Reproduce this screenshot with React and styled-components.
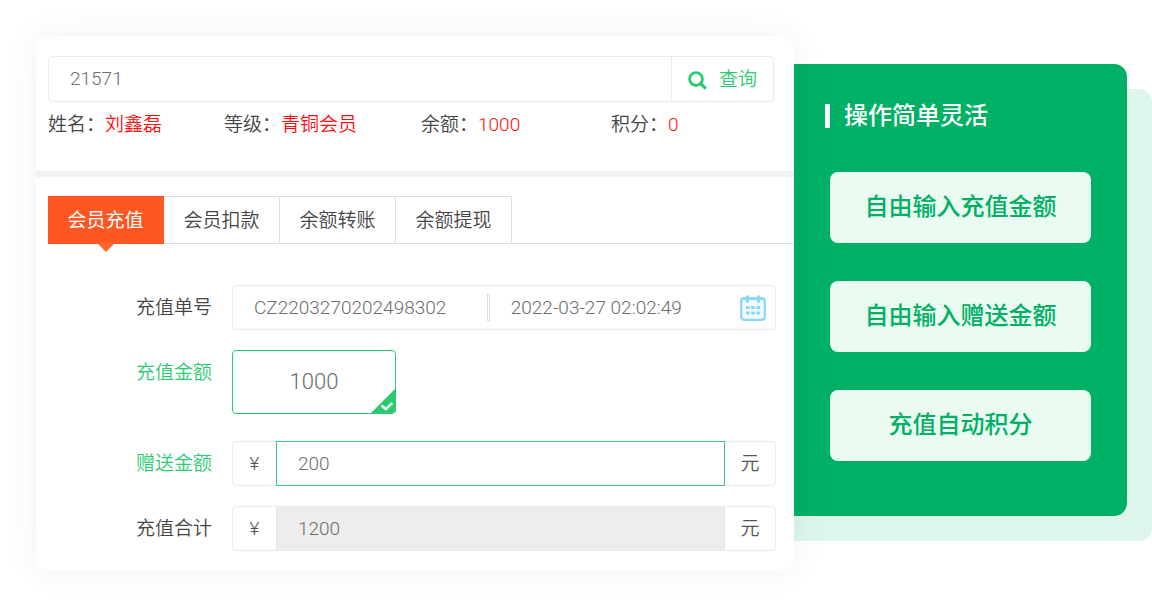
import React, { useState } from "react";
import styled, { createGlobalStyle, css } from "styled-components";

const green = "#2acb70";
const line = "#ebebeb";

const GlobalStyle = createGlobalStyle`
  *, *::before, *::after { box-sizing: border-box; }
  body {
    margin: 0;
    background: #fff;
    color: #444;
    font: 350 19px/28px Roboto, "Noto Sans CJK SC", sans-serif;
  }
  button, input { font: inherit; color: inherit; }
  ul, dl, dd, h2 { margin: 0; padding: 0; list-style: none; }
`;

const Page = styled.div`
  display: grid;
  grid-template-columns: minmax(0, 758fr) minmax(0, 333fr);
  align-items: start;
  padding: 36px 25px 36px 36px;
`;

const Card = styled.main`
  position: relative;
  z-index: 1;
  background: #fff;
  border-radius: 14px;
  box-shadow: 0 0 36px rgba(0, 0, 0, 0.06);
`;

const Member = styled.section`
  padding: 20px 20px 32px 12px;
  border-bottom: 6px solid #f2f2f2;
`;

const fieldBox = css`
  display: flex;
  align-items: stretch;
  border: 1px solid ${line};
  border-radius: 4px;
`;

const SearchBar = styled.form`
  ${fieldBox}
  height: 46px;
`;

const TextInput = styled.input`
  flex: ${(p) => p.$grow ?? 1} 1 0;
  min-width: 0;
  padding: 0 21px;
  border: 0;
  outline: 0;
  background: transparent;
  color: #6c6c6c;
`;

const SearchButton = styled.button`
  display: flex;
  align-items: center;
  gap: 12px;
  padding: 2px 16px 0;
  border: 0;
  border-left: 1px solid ${line};
  background: none;
  color: ${green};
  cursor: pointer;
`;

const Facts = styled.dl`
  display: grid;
  grid-template-columns: 176fr 197fr 190fr 163fr;
  margin-top: 9px;
`;

const Fact = styled.div`
  display: flex;
  white-space: nowrap;

  dd { color: #ff0d0d; }
`;

const Tabs = styled.div`
  display: flex;
  margin: 19px 0 0 12px;
  border-bottom: 1px solid #dedede;
`;

const Tab = styled.button`
  position: relative;
  width: 116px;
  height: 48px;
  margin-bottom: -1px;
  padding: 2px 0 0;
  border: solid #dedede;
  border-width: 1px 1px 1px 0;
  background: #fff;
  cursor: pointer;

  ${(p) =>
    p.$active &&
    css`
      border-color: #ff5722;
      background: #ff5722;
      color: #fff;
      font-weight: 400;

      &::after {
        content: "";
        position: absolute;
        top: 100%;
        left: 50%;
        margin-left: -9px;
        border: 9px solid transparent;
        border-bottom: 0;
        border-top-color: #ff6636;
      }
    `}
`;

const Form = styled.form`
  display: grid;
  gap: 20px;
  padding: 41px 18px 20px 36px;
`;

const Row = styled.div`
  display: grid;
  grid-template-columns: 140px minmax(0, 1fr);
  column-gap: 20px;
  padding-bottom: ${(p) => (p.$spaced ? 7 : 0)}px;
`;

const Label = styled.label`
  line-height: 46px;
  height: 45px;
  text-align: right;
  color: ${(p) => (p.$required ? green : "#444")};
`;

const Field = styled.div`
  ${fieldBox}
  height: 45px;
`;

const Divider = styled.span`
  width: 3px;
  margin: 8px 0;
  border: 1px solid #dcdcdc;
`;

const CalendarButton = styled.button`
  display: flex;
  align-items: center;
  padding: 0 9px;
  border: 0;
  background: none;
  cursor: pointer;
`;

const Unit = styled.span`
  width: ${(p) => p.$width}px;
  line-height: 43px;
  text-align: center;
  color: #555;
`;

const AmountInput = styled(TextInput)`
  ${(p) =>
    p.readOnly
      ? css`
          border: solid #e6e6e6;
          border-width: 0 1px;
          background: #ededed;
        `
      : css`
          margin: -1px 0;
          border: 1px solid #3cc884;
        `}
`;

const Preset = styled.button`
  position: relative;
  width: 164px;
  height: 64px;
  padding: 0;
  border: 1px solid ${green};
  border-radius: 4px;
  background: #fff;
  color: #6c6c6c;
  font-size: 22px;
  overflow: hidden;

  svg {
    position: absolute;
    right: -1px;
    bottom: -1px;
  }
`;

const Promo = styled.aside`
  margin-top: 28px;
  padding: 40px 36px 55px;
  border-radius: 0 13px 13px 0;
  background: #00b065;
  box-shadow: 25px 25px 0 #def5eb, 0 25px 0 #def5eb;
`;

const PromoTitle = styled.h2`
  display: flex;
  align-items: center;
  gap: 14px;
  margin: 0 0 44px -5px;
  color: #fff;
  font-size: 24px;
  font-weight: 500;
  line-height: 24px;

  &::before {
    content: "";
    width: 5px;
    height: 24px;
    background: #fff;
  }
`;

const PromoList = styled.ul`
  display: grid;
  gap: 38px;
`;

const PromoItem = styled.li`
  padding: 17px 0 18px;
  border-radius: 8px;
  background: #eafbf2;
  color: #00b065;
  font-size: 24px;
  font-weight: 500;
  line-height: 36px;
  text-align: center;
`;

const SearchIcon = () => (
  <svg width="19" height="19" viewBox="0 0 19 19" fill="none" stroke={green} aria-hidden="true">
    <circle cx="8" cy="8" r="6.4" strokeWidth="2.8" />
    <path d="M12.6 12.5l4.2 4.2" strokeWidth="3.2" strokeLinecap="round" />
  </svg>
);

const CalendarIcon = () => (
  <svg width="26" height="26" viewBox="0 0 26 26" fill="none" stroke="#8bd6fa" aria-hidden="true">
    <rect x="1.2" y="3" width="23.6" height="21.8" rx="3" fill="#f1fbff" strokeWidth="2.2" />
    <path d="M2.5 3.6h21" strokeWidth="3" />
    <path d="M7.5 1.5v5M18.5 1.5v5" strokeWidth="3" strokeLinecap="round" />
    <path
      d="M6 12.5h3.6M11.2 12.5h3.6M16.4 12.5h3.6M6 18h3.6M11.2 18h3.6M16.4 18h3.6"
      strokeWidth="3"
    />
  </svg>
);

const CornerCheck = () => (
  <svg width="26" height="26" viewBox="0 0 26 26" fill="none" aria-hidden="true">
    <path d="M26 0v26H0z" fill={green} />
    <path d="M11.5 17.5l4.4 3.6 6.4-6.2" stroke="#f2fff7" strokeWidth="2.6" />
  </svg>
);

const facts = [
  ["姓名：", "刘鑫磊"],
  ["等级：", "青铜会员"],
  ["余额：", "1000"],
  ["积分：", "0"],
];
const tabs = ["会员充值", "会员扣款", "余额转账", "余额提现"];
const promos = ["自由输入充值金额", "自由输入赠送金额", "充值自动积分"];

export default function App() {
  const [active, setActive] = useState(0);
  const stop = (e) => e.preventDefault();

  return (
    <>
      <GlobalStyle />
      <Page>
        <Card>
          <Member>
            <SearchBar onSubmit={stop}>
              <TextInput defaultValue="21571" aria-label="会员号" />
              <SearchButton type="submit">
                <SearchIcon />
                查询
              </SearchButton>
            </SearchBar>
            <Facts>
              {facts.map(([name, value]) => (
                <Fact key={name}>
                  <dt>{name}</dt>
                  <dd>{value}</dd>
                </Fact>
              ))}
            </Facts>
          </Member>

          <Tabs role="tablist">
            {tabs.map((name, i) => (
              <Tab
                key={name}
                type="button"
                role="tab"
                aria-selected={i === active}
                $active={i === active}
                onClick={() => setActive(i)}
              >
                {name}
              </Tab>
            ))}
          </Tabs>

          <Form onSubmit={stop}>
            <Row>
              <Label htmlFor="order">充值单号</Label>
              <Field>
                <TextInput id="order" $grow={255} defaultValue="CZ2203270202498302" />
                <Divider />
                <TextInput $grow={240} defaultValue="2022-03-27 02:02:49" aria-label="充值时间" />
                <CalendarButton type="button" aria-label="选择时间">
                  <CalendarIcon />
                </CalendarButton>
              </Field>
            </Row>
            <Row $spaced>
              <Label as="span" id="preset-label" $required>
                充值金额
              </Label>
              <Preset type="button" aria-pressed="true" aria-describedby="preset-label">
                1000
                <CornerCheck />
              </Preset>
            </Row>
            <Row>
              <Label htmlFor="bonus" $required>
                赠送金额
              </Label>
              <Field>
                <Unit $width={43}>¥</Unit>
                <AmountInput id="bonus" defaultValue="200" />
                <Unit $width={50}>元</Unit>
              </Field>
            </Row>
            <Row>
              <Label htmlFor="total">充值合计</Label>
              <Field>
                <Unit $width={43}>¥</Unit>
                <AmountInput id="total" value="1200" readOnly />
                <Unit $width={50}>元</Unit>
              </Field>
            </Row>
          </Form>
        </Card>

        <Promo>
          <PromoTitle>操作简单灵活</PromoTitle>
          <PromoList>
            {promos.map((text) => (
              <PromoItem key={text}>{text}</PromoItem>
            ))}
          </PromoList>
        </Promo>
      </Page>
    </>
  );
}
